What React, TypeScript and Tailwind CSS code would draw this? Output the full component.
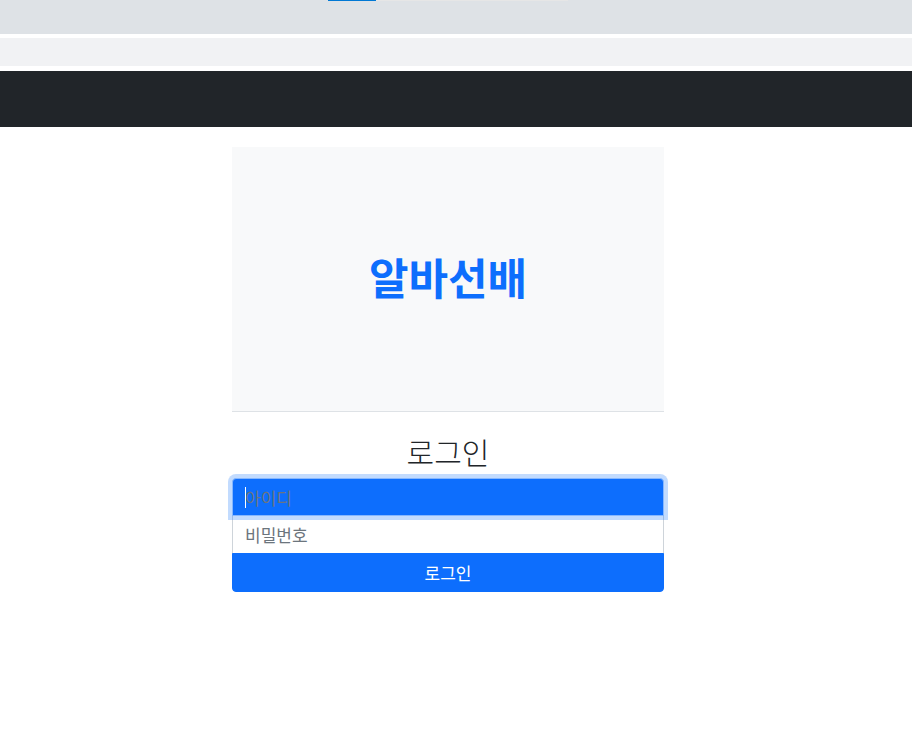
const font = { fontFamily: '"Noto Sans CJK KR", "Noto Sans", sans-serif' };

export default function App() {
  return (
    <div className="min-h-[746px] bg-white text-[#212529]" style={font}>
      <div className="h-[34px] bg-[#dee2e6]">
        <div className="flex h-px">
          <div className="w-[328px]" />
          <div className="w-[48px] bg-[#0078d4]" />
          <div className="w-[192px] bg-[#e6e6e6]" />
        </div>
      </div>
      <div className="mt-[4px] h-[28px] bg-[#f1f2f4]" />
      <div className="mt-[5px] h-[56px] bg-[#212529]" />

      <main className="ml-[232px] mt-[20px] w-[432px]">
        <section className="flex h-[265px] items-center justify-center border-b border-[#dee2e6] bg-[#f8f9fa] pb-[5px]">
          <h1 className="text-[43px] font-bold leading-none text-[#0d6efd]">알바선배</h1>
        </section>

        <h2 className="mt-[21px] mb-[9px] text-center text-[30px] leading-[36px] font-light">로그인</h2>

        <form className="flex flex-col" onSubmit={(e) => e.preventDefault()}>
          <div className="relative">
            <input
              placeholder="아이디"
              className="relative z-10 block h-[38px] w-full rounded-t-[4px] border border-[#86b7fe] bg-[#0d6efd] px-3 text-[17px] text-white placeholder:text-[#6c757d] shadow-[0_0_0_4px_rgba(13,110,253,0.25)] outline-none"
            />
            <span className="absolute left-[13px] top-[9px] z-20 h-[21px] w-px bg-white" />
          </div>
          <input
            type="password"
            placeholder="비밀번호"
            className="-mt-px block h-[39px] w-full border border-[#ced4da] bg-white px-3 text-[17px] placeholder:text-[#6c757d] outline-none"
          />
          <button
            type="submit"
            className="-mt-px h-[39px] w-full rounded-b-[4px] border border-[#0d6efd] bg-[#0d6efd] text-[17px] text-white"
          >
            로그인
          </button>
        </form>
      </main>
    </div>
  );
}
